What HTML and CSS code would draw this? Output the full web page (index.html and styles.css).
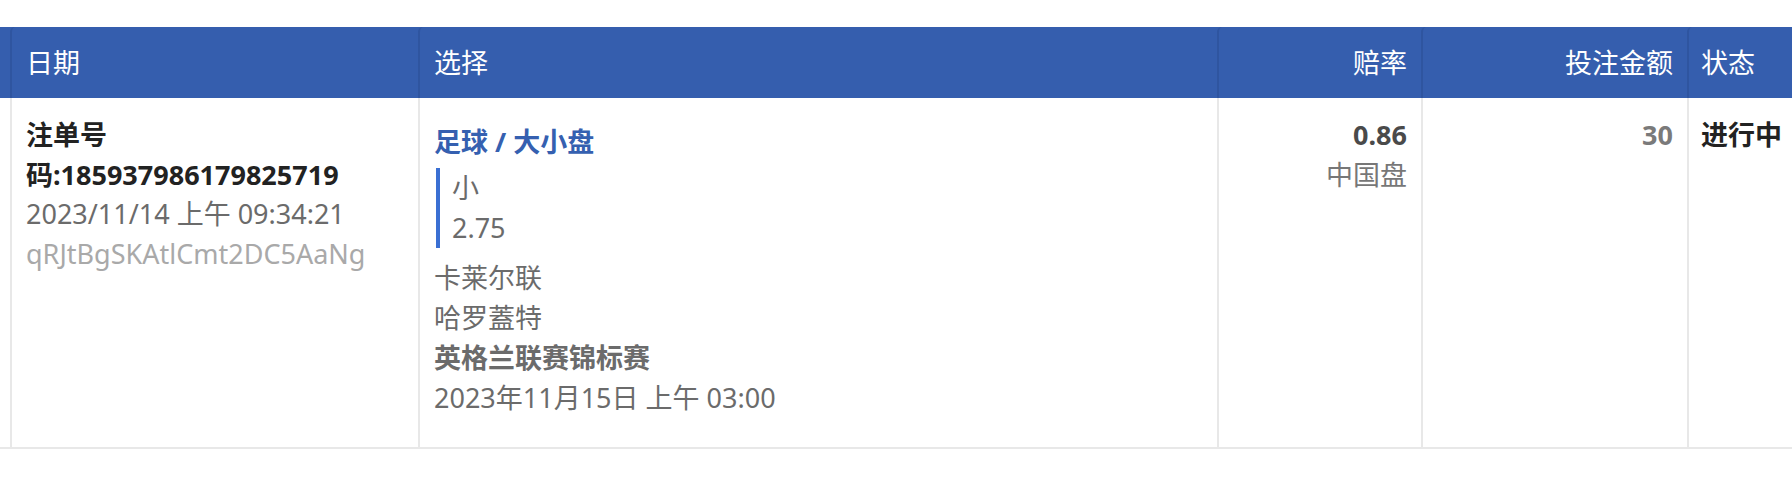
FILE: index.html
```html
<!DOCTYPE html>
<html lang="zh-CN">
<head>
<meta charset="utf-8">
<title>注单</title>
<link rel="stylesheet" href="styles.css">
</head>
<body>
<div class="page">
  <table class="bets">
    <thead>
      <tr>
        <th class="gap"></th>
        <th class="c-date">日期</th>
        <th class="c-sel">选择</th>
        <th class="c-odds num">赔率</th>
        <th class="c-amt num">投注金额</th>
        <th class="c-status">状态</th>
      </tr>
    </thead>
    <tbody>
      <tr>
        <td class="gap"></td>
        <td>
          <div class="ticket">注单号码:185937986179825719</div>
          <div class="muted">2023/11/14 上午 09:34:21</div>
          <div class="faint">qRJtBgSKAtlCmt2DC5AaNg</div>
        </td>
        <td>
          <div class="sel-title">足球 / 大小盘</div>
          <div class="sel-pick">
            <div>小</div>
            <div>2.75</div>
          </div>
          <div class="muted line">卡莱尔联</div>
          <div class="muted line">哈罗蓋特</div>
          <div class="muted line strong">英格兰联赛锦标赛</div>
          <div class="muted line">2023年11月15日 上午 03:00</div>
        </td>
        <td class="num">
          <div class="odds">0.86</div>
          <div class="odds-type">中国盘</div>
        </td>
        <td class="num">
          <div class="amount">30</div>
        </td>
        <td class="c-status-cell">
          <div class="status">进行中</div>
        </td>
      </tr>
    </tbody>
  </table>
</div>
</body>
</html>
```

FILE: styles.css
```css
html, body {
  margin: 0;
  padding: 0;
  background: #ffffff;
}

body {
  font-family: "Noto Sans", "Noto Sans CJK SC", sans-serif;
  font-size: 27px;
  line-height: 39.5px;
  color: #222222;
}

.page {
  padding-top: 27px;
  overflow: hidden;
}

.bets {
  width: 1792px;
  border-collapse: separate;
  border-spacing: 0;
  table-layout: fixed;
  background: #355eae;
}

.bets th {
  box-sizing: border-box;
  height: 71px;
  padding: 0 14px;
  background: #355eae;
  color: #ffffff;
  font-weight: 400;
  text-align: left;
  vertical-align: middle;
  border-left: 2px solid #2f55a0;
  border-top-left-radius: 5px;
  white-space: nowrap;
}

.bets th.gap {
  width: 10px;
  padding: 0;
  border-left: none;
  border-radius: 0;
}

.c-date { width: 408px; }
.c-sel { width: 799px; }
.c-odds { width: 204px; }
.c-amt { width: 266px; }
.c-status { width: 105px; }

.bets th.c-status,
.bets td.c-status-cell {
  padding-left: 12px;
}

.bets .num {
  text-align: right;
}

.bets td {
  box-sizing: border-box;
  height: 351px;
  padding: 17px 14px 0;
  vertical-align: top;
  background: #ffffff;
  border-left: 2px solid #e8e8e8;
  border-bottom: 2px solid #e8e8e8;
}

.bets td.gap {
  padding: 0;
  border-left: none;
}

.ticket {
  font-weight: 700;
  color: #222222;
}

.muted {
  color: #6b6b6b;
}

.faint {
  color: #a9a9a9;
}

.sel-title {
  margin-top: 7px;
  font-weight: 700;
  color: #3560b0;
}

.sel-pick {
  margin: 6px 0 10px 2px;
  padding-left: 12px;
  border-left: 4px solid #3a6fd3;
  color: #6b6b6b;
  line-height: 40px;
}

.line {
  line-height: 40px;
}

.strong {
  font-weight: 700;
}

.odds {
  font-weight: 700;
  color: #4a4a4a;
}

.odds-type {
  color: #777777;
}

.amount {
  font-weight: 700;
  color: #7a7a7a;
}

.status {
  font-weight: 700;
  color: #222222;
  white-space: nowrap;
}
```
